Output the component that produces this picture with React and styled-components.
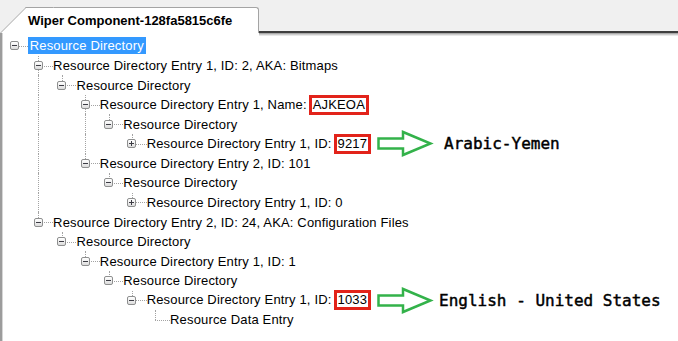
import React from 'react';
import styled, { createGlobalStyle, css } from 'styled-components';

const GlobalStyle = createGlobalStyle`
  html, body {
    margin: 0;
    padding: 0;
    background: #fff;
  }
  body {
    font-family: 'Liberation Sans', Arial, sans-serif;
  }
`;

const COL = 23.4;
const ROW = 19.57;
const DOT = '#a3a3a3';

const Window = styled.div`
  width: 678px;
  height: 341px;
  display: flex;
  flex-direction: column;
  overflow: hidden;
  background: #fff;
`;

const TabStrip = styled.div`
  position: relative;
  z-index: 2;
  height: 33px;
  flex: none;
  display: flex;
  align-items: flex-end;
  background: #f0f0f0;
`;

const Tab = styled.div`
  position: relative;
  z-index: 1;
  box-sizing: border-box;
  height: 26px;
  margin-left: 26px;
  padding: 0 26px 0 2px;
  display: flex;
  align-items: center;
  background: #fff;
  border-top: 1px solid #a4a4a4;
  border-right: 1px solid #a4a4a4;
  border-top-right-radius: 3px;
  font-size: 13px;
  font-weight: bold;
  color: #000;

  /* slanted left edge of the tab */
  &::before {
    content: '';
    position: absolute;
    left: -26px;
    top: -1px;
    bottom: 0;
    width: 27px;
    background: #fff;
    border-left: 1px solid #a4a4a4;
    border-top: 1px solid #a4a4a4;
    transform: skewX(-45deg);
    transform-origin: bottom left;
    z-index: -1;
  }
`;

const Filler = styled.div`
  flex: 1;
  align-self: stretch;
  box-sizing: border-box;
  border-bottom: 2px solid #3e3e3e;
  box-shadow: 0 1px 0 #a9a9a9, 0 2px 0 #cdcdcd, 0 3px 0 #e8e8e8;
`;

const Panel = styled.div`
  flex: 1;
  padding: 3.2px 0 0 1.3px;
  border-left: 2px solid #9c9c9c;
  box-shadow: inset 1px 0 #d6d6d6;
`;

const Row = styled.div`
  display: flex;
  align-items: center;
  height: ${ROW}px;
  white-space: nowrap;
`;

const Guide = styled.span`
  position: relative;
  flex: none;
  width: ${COL}px;
  height: 100%;
  display: flex;
  align-items: center;
  justify-content: center;

  &::before {
    content: '';
    position: absolute;
    left: 50%;
    top: ${({ $up }) => ($up ? '0' : '50%')};
    bottom: ${({ $down }) => ($down ? '0' : '50%')};
    border-left: 1px dotted ${DOT};
    display: ${({ $up, $down }) => ($up || $down ? 'block' : 'none')};
  }

  &::after {
    content: '';
    position: absolute;
    left: 50%;
    right: -3px;
    top: 50%;
    border-top: 1px dotted ${DOT};
    display: ${({ $branch }) => ($branch ? 'block' : 'none')};
  }
`;

const Toggle = styled.span`
  position: relative;
  z-index: 1;
  box-sizing: border-box;
  width: 9px;
  height: 9px;
  border: 1px solid #8e8f8f;
  border-radius: 2px;
  background: linear-gradient(#ffffff, #dcdcdc);

  &::before {
    content: '';
    position: absolute;
    left: 1px;
    right: 1px;
    top: 3px;
    height: 1px;
    background: #3c3c44;
  }

  ${({ $open }) =>
    !$open &&
    css`
      &::after {
        content: '';
        position: absolute;
        left: 3px;
        top: 1px;
        bottom: 1px;
        width: 1px;
        background: #3c3c44;
      }
    `}
`;

const Label = styled.span`
  position: relative;
  z-index: 1;
  margin-left: 1px;
  padding: 1px 2px;
  line-height: 15px;
  font-size: 13px;
  letter-spacing: 0.16px;
  color: #000;

  ${({ $selected }) =>
    $selected &&
    css`
      background: #3399ff;
      color: #fff;
    `}
`;

const Mark = styled.span`
  display: inline-block;
  margin-left: 2px;
  padding: 0 1px;
  border: 3px solid #e2231a;
  line-height: 14px;
`;

const Arrow = styled.svg`
  flex: none;
  margin-left: 4px;
  overflow: visible;
`;

const Note = styled.span`
  margin-left: ${({ $gap }) => $gap}px;
  font-family: 'DejaVu Sans Mono', 'Liberation Mono', monospace;
  font-size: 16px;
  -webkit-text-stroke: 0.45px #000;
  color: #000;
`;

const rows = [
  { level: 0, text: 'Resource Directory', toggle: 'minus', selected: true },
  { level: 1, text: 'Resource Directory Entry 1, ID: 2, AKA: Bitmaps', toggle: 'minus' },
  { level: 2, text: 'Resource Directory', toggle: 'minus' },
  { level: 3, text: 'Resource Directory Entry 1, Name:', mark: 'AJKEOA', toggle: 'minus' },
  { level: 4, text: 'Resource Directory', toggle: 'minus' },
  { level: 5, text: 'Resource Directory Entry 1, ID:', mark: '9217', toggle: 'plus', note: 'Arabic-Yemen', noteGap: 11 },
  { level: 3, text: 'Resource Directory Entry 2, ID: 101', toggle: 'minus' },
  { level: 4, text: 'Resource Directory', toggle: 'minus' },
  { level: 5, text: 'Resource Directory Entry 1, ID: 0', toggle: 'plus' },
  { level: 1, text: 'Resource Directory Entry 2, ID: 24, AKA: Configuration Files', toggle: 'minus' },
  { level: 2, text: 'Resource Directory', toggle: 'minus' },
  { level: 3, text: 'Resource Directory Entry 1, ID: 1', toggle: 'minus' },
  { level: 4, text: 'Resource Directory', toggle: 'minus' },
  { level: 5, text: 'Resource Directory Entry 1, ID:', mark: '1033', toggle: 'minus', note: 'English - United States', noteGap: 6 },
  { level: 6, text: 'Resource Data Entry' },
];

// is there a later row at `level` before the tree climbs above it?
const continues = (i, level) => {
  for (let j = i + 1; j < rows.length; j++) {
    if (rows[j].level < level) return false;
    if (rows[j].level === level) return true;
  }
  return false;
};

const GreenArrow = () => (
  <Arrow width="56" height="27" viewBox="0 0 56 27">
    <path
      d="M1.5 8.5 H26 V2 L53.5 13.5 L26 25 V18.5 H1.5 Z"
      fill="none"
      stroke="#33b24a"
      strokeWidth="2.5"
      strokeLinejoin="miter"
    />
  </Arrow>
);

const TreeRow = ({ row, index }) => {
  const guides = [];
  for (let k = 0; k < row.level; k++) {
    const line = k > 0 && continues(index, k);
    guides.push(<Guide key={k} $up={line} $down={line} />);
  }

  return (
    <Row>
      {guides}
      <Guide $up={row.level > 0} $down={continues(index, row.level)} $branch>
        {row.toggle && <Toggle $open={row.toggle === 'minus'} />}
      </Guide>
      <Label $selected={row.selected}>
        {row.text}
        {row.mark && <Mark>{row.mark}</Mark>}
      </Label>
      {row.note && <GreenArrow />}
      {row.note && <Note $gap={row.noteGap}>{row.note}</Note>}
    </Row>
  );
};

const App = () => (
  <>
    <GlobalStyle />
    <Window>
      <TabStrip>
        <Tab>Wiper Component-128fa5815c6fe</Tab>
        <Filler />
      </TabStrip>
      <Panel>
        {rows.map((row, i) => (
          <TreeRow key={i} row={row} index={i} />
        ))}
      </Panel>
    </Window>
  </>
);

export default App;
